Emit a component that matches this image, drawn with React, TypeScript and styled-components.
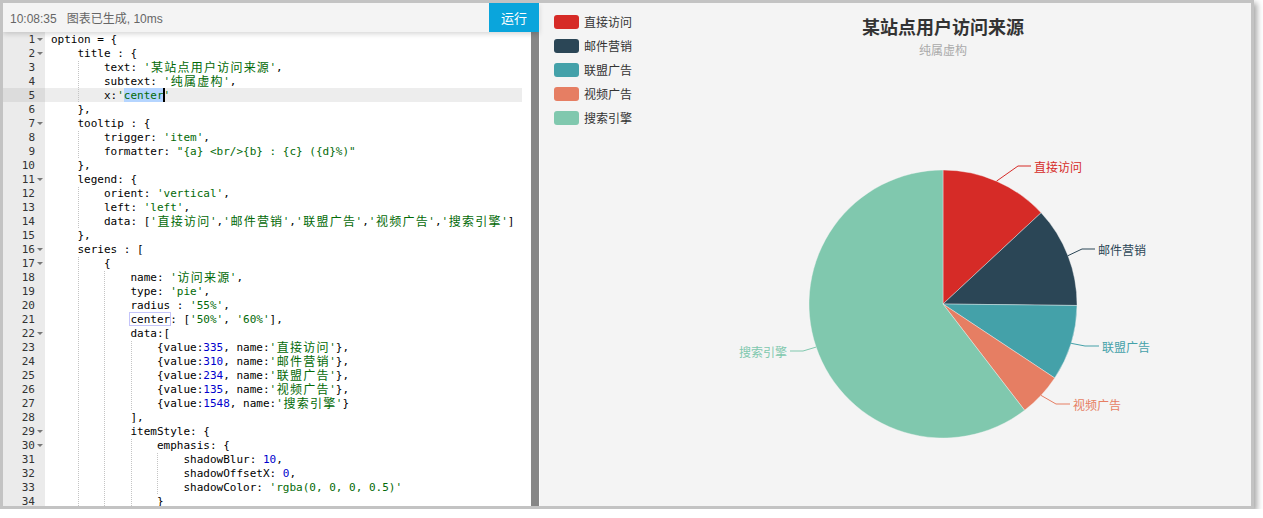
import React from 'react';
import styled, { createGlobalStyle } from 'styled-components';

// width of one monospace cell (DejaVu Sans Mono 11px)
const CH = 6.62;

const GlobalStyle = createGlobalStyle`
  html, body {
    margin: 0;
    padding: 0;
    background: #fff;
  }
  body {
    font-family: "Liberation Sans", "Noto Sans CJK SC", sans-serif;
  }
`;

const Frame = styled.div`
  display: flex;
  width: 1248px;
  height: 503px;
  border: 3px solid #c3c3c3;
  box-shadow: 3px 3px 6px rgba(0, 0, 0, 0.35);
  overflow: hidden;
`;

const EditorPane = styled.div`
  width: 536px;
  flex: none;
  display: flex;
  flex-direction: column;
  background: #fff;
`;

const Toolbar = styled.div`
  height: 29px;
  flex: none;
  display: flex;
  align-items: center;
  background: #f4f4f4;
  box-shadow: 0 2px 5px rgba(0, 0, 0, 0.16);
  position: relative;
  z-index: 2;
`;

const Status = styled.div`
  padding-left: 7px;
  font-size: 12px;
  color: #666;
  span + span {
    margin-left: 10px;
  }
`;

const RunButton = styled.button`
  margin-left: auto;
  width: 50px;
  height: 100%;
  border: none;
  padding: 0;
  background: #0aa5dc;
  color: #fff;
  font-size: 13px;
  font-family: "Noto Sans CJK SC", sans-serif;
`;

const CodeArea = styled.div`
  flex: 1;
  min-height: 0;
  display: flex;
  overflow: hidden;
  font-family: "DejaVu Sans Mono", "Liberation Mono", monospace;
  font-size: 11px;
`;

const Gutter = styled.div`
  width: 42px;
  flex: none;
  background: #ebebeb;
  color: #333;
`;

const GutterCell = styled.div<{ $active?: boolean }>`
  height: 14px;
  line-height: 15px;
  display: flex;
  justify-content: flex-end;
  background: ${p => (p.$active ? '#dcdcdc' : 'transparent')};
`;

const FoldSlot = styled.div`
  width: 10px;
  display: flex;
  align-items: center;
  justify-content: center;
`;

const FoldMark = styled.div`
  width: 0;
  height: 0;
  border-left: 3px solid transparent;
  border-right: 3px solid transparent;
  border-top: 3px solid #777;
  margin-top: 1px;
`;

const Scroller = styled.div`
  flex: 1;
  margin-right: 9px;
  color: #000;
`;

const Line = styled.div<{ $active?: boolean }>`
  height: 14px;
  line-height: 15px;
  padding-left: 6px;
  white-space: pre;
  position: relative;
  z-index: 0;
  background: ${p => (p.$active ? 'rgba(0, 0, 0, 0.07)' : 'transparent')};
`;

const Indent = styled.span<{ $guide?: boolean }>`
  background-image: ${p =>
    p.$guide ? 'linear-gradient(to bottom, #c4c4c4 50%, transparent 50%)' : 'none'};
  background-size: 1px 2px;
  background-repeat: repeat-y;
  background-position: left top;
`;

const Str = styled.span`
  color: #036a07;
`;

const Num = styled.span`
  color: #0000cd;
`;

const Cjk = styled.span`
  display: inline-block;
  width: ${CH * 2}px;
  height: 14px;
  line-height: 14px;
  vertical-align: top;
  text-align: center;
  font-family: "Noto Sans CJK SC", sans-serif;
  font-size: 12px;
`;

const Selection = styled.div`
  position: absolute;
  top: 0;
  height: 14px;
  background: #b5d5ff;
  z-index: -1;
`;

const WordBox = styled.div`
  position: absolute;
  top: 0;
  height: 14px;
  box-sizing: border-box;
  border: 1px solid #c4c4fa;
  z-index: -1;
`;

const Cursor = styled.div`
  position: absolute;
  top: 0;
  width: 2px;
  height: 14px;
  background: #000;
`;

const Scrollbar = styled.div`
  width: 8px;
  flex: none;
  background: #878787;
`;

const ChartPane = styled.div`
  flex: 1;
  position: relative;
  background: #f4f4f4;
  border-left: 1px solid #fbfbfb;
  overflow: hidden;
  font-family: "Noto Sans CJK SC", sans-serif;
`;

const ChartTitle = styled.div`
  position: absolute;
  top: 13px;
  left: 0;
  width: 806px;
  text-align: center;
`;

const TitleText = styled.div`
  font-size: 18px;
  font-weight: bold;
  line-height: 20px;
  color: #333;
`;

const SubText = styled.div`
  margin-top: 7px;
  font-size: 12px;
  line-height: 14px;
  color: #aaa;
`;

const Legend = styled.div`
  position: absolute;
  top: 12px;
  left: 14px;
  display: flex;
  flex-direction: column;
  gap: 10px;
`;

const LegendItem = styled.div`
  display: flex;
  align-items: center;
  gap: 5px;
  font-size: 12px;
  line-height: 14px;
  color: #333;
`;

const Swatch = styled.div<{ $color: string }>`
  width: 25px;
  height: 14px;
  border-radius: 3px;
  background: ${p => p.$color};
`;

const PieSvg = styled.svg`
  position: absolute;
  left: 0;
  top: 0;
`;

const code = [
  'option = {',
  '    title : {',
  "        text: '某站点用户访问来源',",
  "        subtext: '纯属虚构',",
  "        x:'center'",
  '    },',
  '    tooltip : {',
  "        trigger: 'item',",
  '        formatter: "{a} <br/>{b} : {c} ({d}%)"',
  '    },',
  '    legend: {',
  "        orient: 'vertical',",
  "        left: 'left',",
  "        data: ['直接访问','邮件营销','联盟广告','视频广告','搜索引擎']",
  '    },',
  '    series : [',
  '        {',
  "            name: '访问来源',",
  "            type: 'pie',",
  "            radius : '55%',",
  "            center: ['50%', '60%'],",
  '            data:[',
  "                {value:335, name:'直接访问'},",
  "                {value:310, name:'邮件营销'},",
  "                {value:234, name:'联盟广告'},",
  "                {value:135, name:'视频广告'},",
  "                {value:1548, name:'搜索引擎'}",
  '            ],',
  '            itemStyle: {',
  '                emphasis: {',
  '                    shadowBlur: 10,',
  '                    shadowOffsetX: 0,',
  "                    shadowColor: 'rgba(0, 0, 0, 0.5)'",
  '                }',
];

const folds = [1, 2, 7, 11, 16, 17, 22, 29, 30];
const activeLine = 5;

const withCjk = (s: string) =>
  s.split(/([\u4e00-\u9fff])/).map((p, i) =>
    /[\u4e00-\u9fff]/.test(p) ? <Cjk key={i}>{p}</Cjk> : p
  );

const tokenRe = /('[^']*'|"[^"]*"|\b\d+(?:\.\d+)?\b)/g;

const renderCode = (text: string) => {
  const lead = text.match(/^ */)![0].length;
  const chunks = Math.floor(lead / 4);
  const rest = text.slice(chunks * 4);
  const parts = rest.split(tokenRe);
  return (
    <>
      {Array.from({ length: chunks }).map((_, i) => (
        <Indent key={'i' + i} $guide={i > 0}>
          {'    '}
        </Indent>
      ))}
      {parts.map((p, i) => {
        if (!p) return null;
        if (p[0] === "'" || p[0] === '"') return <Str key={i}>{withCjk(p)}</Str>;
        if (/^\d/.test(p)) return <Num key={i}>{p}</Num>;
        return <React.Fragment key={i}>{p}</React.Fragment>;
      })}
    </>
  );
};

const colX = (col: number) => 6 + col * CH;

const Editor = () => (
  <EditorPane>
    <Toolbar>
      <Status>
        <span>10:08:35</span>
        <span>图表已生成, 10ms</span>
      </Status>
      <RunButton>运行</RunButton>
    </Toolbar>
    <CodeArea>
      <Gutter>
        {code.map((_, i) => (
          <GutterCell key={i} $active={i + 1 === activeLine}>
            <span>{i + 1}</span>
            <FoldSlot>{folds.includes(i + 1) && <FoldMark />}</FoldSlot>
          </GutterCell>
        ))}
      </Gutter>
      <Scroller>
        {code.map((text, i) => (
          <Line key={i} $active={i + 1 === activeLine}>
            {i + 1 === 5 && (
              <>
                <Selection style={{ left: colX(11), width: 6 * CH }} />
                <Cursor style={{ left: colX(17) - 1 }} />
              </>
            )}
            {i + 1 === 21 && <WordBox style={{ left: colX(12) - 1, width: 6 * CH + 2 }} />}
            {renderCode(text)}
          </Line>
        ))}
      </Scroller>
      <Scrollbar />
    </CodeArea>
  </EditorPane>
);

type Slice = {
  name: string;
  value: number;
  color: string;
  bend: [number, number];
  end: number;
  side: 1 | -1;
};

const slices: Slice[] = [
  { name: '直接访问', value: 335, color: '#d62b27', bend: [478, 163], end: 491, side: 1 },
  { name: '邮件营销', value: 310, color: '#2b4656', bend: [542, 246], end: 555, side: 1 },
  { name: '联盟广告', value: 234, color: '#44a1a9', bend: [545, 343], end: 559, side: 1 },
  { name: '视频广告', value: 135, color: '#e67e63', bend: [516, 401], end: 530, side: 1 },
  { name: '搜索引擎', value: 1548, color: '#80c8ae', bend: [263, 348], end: 250, side: -1 },
];

const CX = 403;
const CY = 301;
const R = 134;

const point = (deg: number, r: number) => {
  const a = (deg * Math.PI) / 180;
  return [CX + r * Math.sin(a), CY - r * Math.cos(a)];
};

const Pie = () => {
  const total = slices.reduce((s, d) => s + d.value, 0);
  let start = 0;
  const arcs = slices.map(d => {
    const sweep = (d.value / total) * 360;
    const a0 = start;
    const a1 = start + sweep;
    start = a1;
    const [x0, y0] = point(a0, R);
    const [x1, y1] = point(a1, R);
    const [ex, ey] = point((a0 + a1) / 2, R);
    const large = sweep > 180 ? 1 : 0;
    return {
      ...d,
      path: `M${CX},${CY} L${x0},${y0} A${R},${R} 0 ${large} 1 ${x1},${y1} Z`,
      edge: [ex, ey],
    };
  });

  return (
    <PieSvg width={806} height={503}>
      {arcs.map(a => (
        <path key={a.name} d={a.path} fill={a.color} stroke="#f4f4f4" strokeWidth={0.4} />
      ))}
      {arcs.map(a => (
        <g key={'l' + a.name}>
          <polyline
            points={`${a.edge[0]},${a.edge[1]} ${a.bend[0]},${a.bend[1]} ${a.end},${a.bend[1]}`}
            fill="none"
            stroke={a.color}
            strokeWidth={1}
          />
          <text
            x={a.end + 3 * a.side}
            y={a.bend[1]}
            fill={a.color}
            fontSize={12}
            dominantBaseline="central"
            textAnchor={a.side > 0 ? 'start' : 'end'}
            fontFamily='"Noto Sans CJK SC", sans-serif'
          >
            {a.name}
          </text>
        </g>
      ))}
    </PieSvg>
  );
};

const Chart = () => (
  <ChartPane>
    <Pie />
    <ChartTitle>
      <TitleText>某站点用户访问来源</TitleText>
      <SubText>纯属虚构</SubText>
    </ChartTitle>
    <Legend>
      {slices.map(s => (
        <LegendItem key={s.name}>
          <Swatch $color={s.color} />
          <span>{s.name}</span>
        </LegendItem>
      ))}
    </Legend>
  </ChartPane>
);

export default function App() {
  return (
    <>
      <GlobalStyle />
      <Frame>
        <Editor />
        <Chart />
      </Frame>
    </>
  );
}
